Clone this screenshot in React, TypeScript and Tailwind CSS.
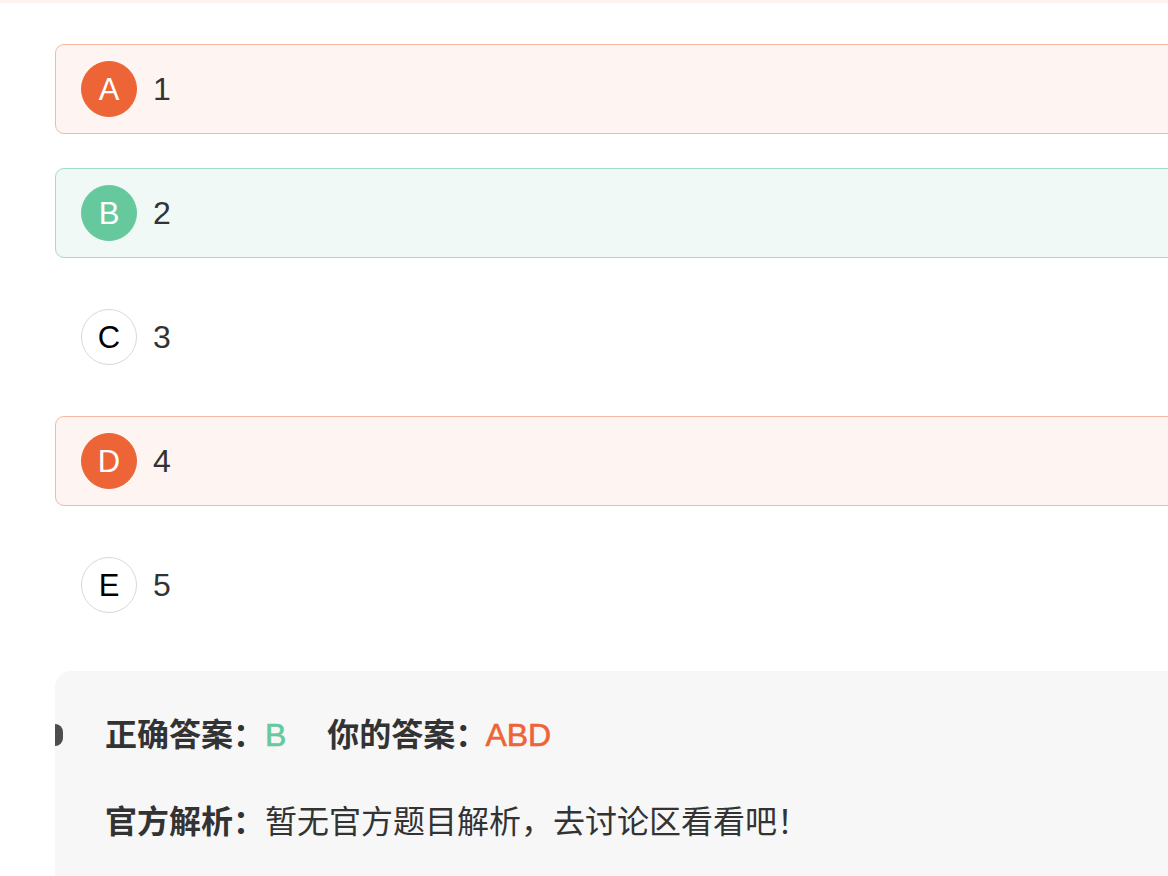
import React from 'react'

type OptionState = 'wrong' | 'right' | 'none'

type Option = { key: string; text: string; state: OptionState }

const options: Option[] = [
  { key: 'A', text: '1', state: 'wrong' },
  { key: 'B', text: '2', state: 'right' },
  { key: 'C', text: '3', state: 'none' },
  { key: 'D', text: '4', state: 'wrong' },
  { key: 'E', text: '5', state: 'none' },
]

const rowStyles: Record<OptionState, string> = {
  wrong: 'border-[#f5b8a0] bg-[#fef5f2]',
  right: 'border-[#a2dec6] bg-[#f0f9f5]',
  none: 'border-transparent bg-white',
}

const badgeStyles: Record<OptionState, string> = {
  wrong: 'bg-[#ed6436] text-white border-[#ed6436]',
  right: 'bg-[#66c99d] text-white border-[#66c99d]',
  none: 'bg-white text-black border-[#d8d8d8]',
}

export default function App() {
  return (
    <div
      className="h-screen w-full overflow-hidden bg-white text-[#333]"
      style={{ fontFamily: '"Liberation Sans", "Noto Sans CJK SC", sans-serif' }}
    >
      {/* top strip */}
      <div className="h-[3px] w-full bg-[#fdf3ef]" />

      <div className="pl-[55px] pt-[41px]">
        {/* options */}
        <div className="flex w-[1200px] flex-col gap-[34px]">
          {options.map(o => (
            <div
              key={o.key}
              className={`flex h-[90px] items-center gap-[16px] rounded-[9px] border pl-[25px] ${rowStyles[o.state]}`}
            >
              <div
                className={`flex h-[56px] w-[56px] shrink-0 items-center justify-center rounded-full border text-[31px] leading-none ${badgeStyles[o.state]}`}
              >
                {o.key}
              </div>
              <span className="text-[32px] leading-none">{o.text}</span>
            </div>
          ))}
        </div>

        {/* analysis panel */}
        <div className="relative mt-[41px] h-[260px] w-[1200px] rounded-tl-[16px] bg-[#f7f7f7] pl-[50px] pt-[44px]">
          <div className="absolute left-0 top-[53px] h-[22px] w-[8px] rounded-r-full bg-[#4d4d4d]" />
          <div className="flex h-[40px] items-center text-[32px]">
            <span className="font-bold">正确答案：</span>
            <span className="text-[#66c99d] [-webkit-text-stroke:0.6px_#66c99d]">B</span>
            <span className="ml-[41px] font-bold">你的答案：</span>
            <span className="-ml-[2px] text-[#ed6436] [-webkit-text-stroke:0.6px_#ed6436]">ABD</span>
          </div>
          <div className="mt-[47px] flex h-[40px] items-center text-[32px]">
            <span className="font-bold">官方解析：</span>
            <span>暂无官方题目解析，去讨论区看看吧！</span>
          </div>
        </div>
      </div>
    </div>
  )
}
